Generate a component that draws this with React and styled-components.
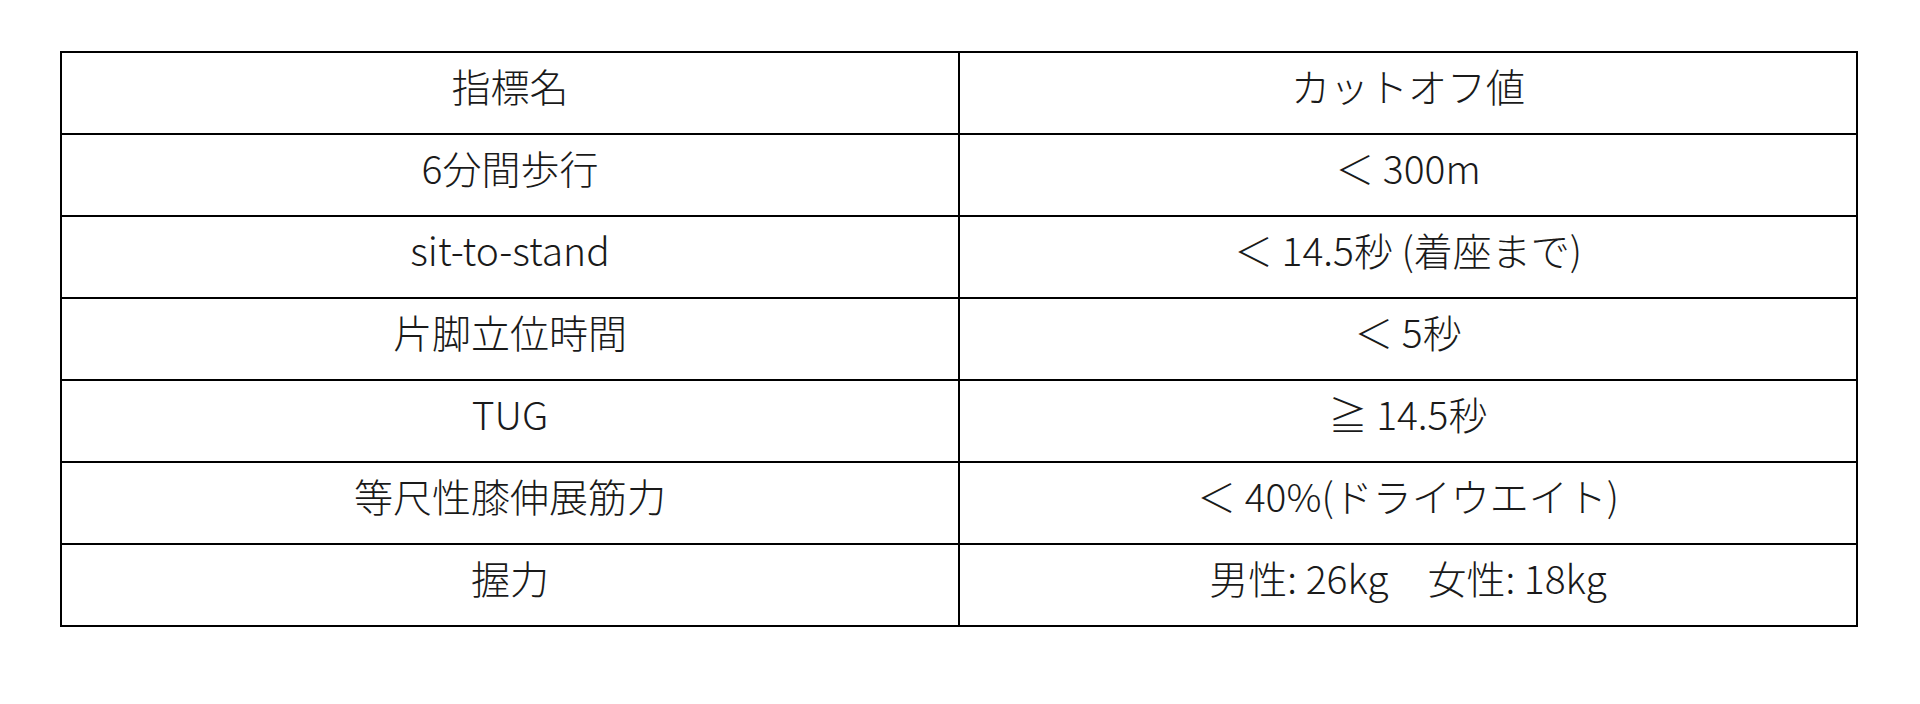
import React from 'react'
import styled, { createGlobalStyle } from 'styled-components'

const GlobalStyle = createGlobalStyle`
  html, body {
    margin: 0;
    padding: 0;
    background: #fff;
  }
  body {
    font-family: "Noto Sans CJK JP", "Noto Sans", sans-serif;
    color: #111;
  }
`

const Page = styled.div`
  width: 1920px;
  height: 704px;
  padding: 51px 62px 0 60px;
  box-sizing: border-box;
`

const Table = styled.table`
  width: 100%;
  border-collapse: collapse;
  table-layout: fixed;
  border: 2px solid #000;
`

const Cell = styled.td`
  height: 82px;
  box-sizing: border-box;
  border: 2px solid #000;
  padding: 0 0 16px;
  text-align: center;
  vertical-align: middle;
  font-size: 39px;
  font-weight: 300;
  line-height: 1.2;
  color: #1a1a1a;
`

const rows = [
  ['指標名', 'カットオフ値'],
  ['6分間歩行', '＜ 300m'],
  ['sit-to-stand', '＜ 14.5秒 (着座まで)'],
  ['片脚立位時間', '＜ 5秒'],
  ['TUG', '≧ 14.5秒'],
  ['等尺性膝伸展筋力', '＜ 40%(ドライウエイト)'],
  ['握力', '男性: 26kg\u3000女性: 18kg'],
]

export default function App() {
  return (
    <Page>
      <GlobalStyle />
      <Table>
        <tbody>
          {rows.map((r, i) => (
            <tr key={i}>
              <Cell>{r[0]}</Cell>
              <Cell>{r[1]}</Cell>
            </tr>
          ))}
        </tbody>
      </Table>
    </Page>
  )
}
